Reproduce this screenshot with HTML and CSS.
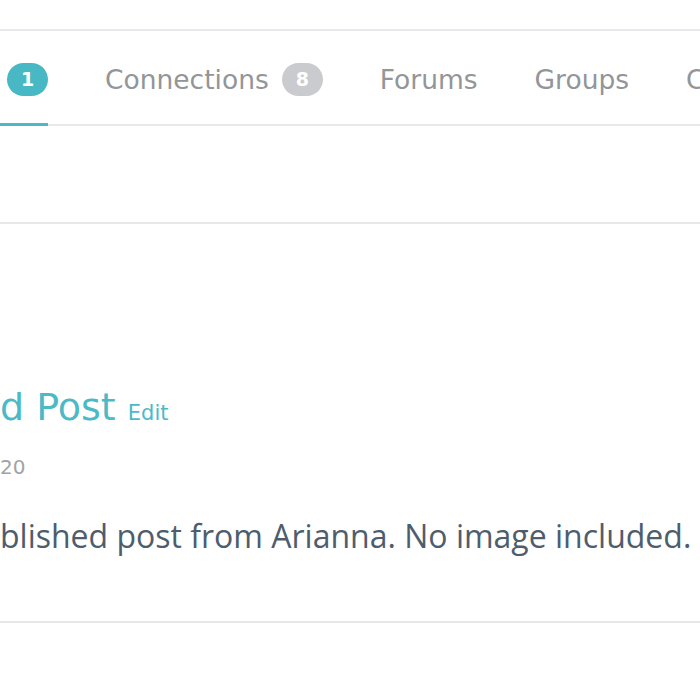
FILE: index.html
```html
<!DOCTYPE html>
<html lang="en">
<head>
<meta charset="utf-8">
<title>Profile</title>
<link rel="stylesheet" href="styles.css">
</head>
<body>
<div class="topbar"></div>
<nav class="tabs">
  <a class="tab active" href="#"><span class="cut">Timeline</span><span class="badge badge-teal">1</span></a>
  <a class="tab" href="#"><span class="label">Connections</span><span class="badge badge-grey">8</span></a>
  <a class="tab" href="#"><span class="label">Forums</span></a>
  <a class="tab" href="#"><span class="label">Groups</span></a>
  <a class="tab" href="#"><span class="label">Courses</span></a>
</nav>
<div class="subbar"></div>
<article class="post">
  <h2 class="post-title"><span class="cut">Unpublishe</span>d Post <a class="edit" href="#">Edit</a></h2>
  <p class="post-date"><span class="cut">March 13, 20</span>20</p>
  <p class="post-body"><span class="cut">This is an unpu</span>blished post from Arianna. No image included.</p>
</article>
</body>
</html>
```

FILE: styles.css
```css
html, body {
  margin: 0;
  padding: 0;
  background: #ffffff;
  overflow: hidden;
}

body {
  font-family: "DejaVu Sans", sans-serif;
  width: 700px;
}

a {
  text-decoration: none;
}

.cut {
  display: inline-flex;
  justify-content: flex-end;
  width: 0;
  white-space: nowrap;
}

.topbar {
  height: 29px;
  border-bottom: 2px solid #e8e9ec;
}

.tabs {
  display: flex;
  height: 93px;
  border-bottom: 2px solid #e8e9ec;
  gap: 57px;
  margin-left: -6px;
  white-space: nowrap;
}

.tab {
  display: flex;
  align-items: center;
  gap: 13px;
  padding-top: 4px;
  margin-bottom: -2px;
  border-bottom: 3px solid transparent;
  color: #939598;
  font-size: 26.5px;
  flex-shrink: 0;
}

.tab.active {
  border-bottom-color: #4ab8c5;
}

.badge {
  display: flex;
  align-items: center;
  justify-content: center;
  width: 41px;
  height: 33px;
  border-radius: 17px;
  color: #ffffff;
  font-size: 19px;
  font-weight: bold;
}

.badge-teal {
  background: #48b8c5;
}

.badge-grey {
  background: #c9cbcf;
}

.subbar {
  height: 96px;
  border-bottom: 2px solid #e6e7e9;
}

.post {
  padding: 161px 0 63px;
  border-bottom: 2px solid #e6e7e9;
}

.post-title {
  margin: 0;
  font-size: 38px;
  line-height: 44px;
  font-weight: normal;
  color: #4cb9c6;
  white-space: nowrap;
}

.edit {
  font-size: 21px;
  color: #4cb9c6;
}

.post-date {
  margin: 20px 0 0;
  font-size: 20px;
  line-height: 24px;
  color: #a2a3a5;
  white-space: nowrap;
}

.post-body {
  margin: 35px 0 0;
  font-family: "Open Sans", sans-serif;
  font-size: 32px;
  line-height: 44px;
  color: #4e5d6e;
  white-space: nowrap;
}
```
